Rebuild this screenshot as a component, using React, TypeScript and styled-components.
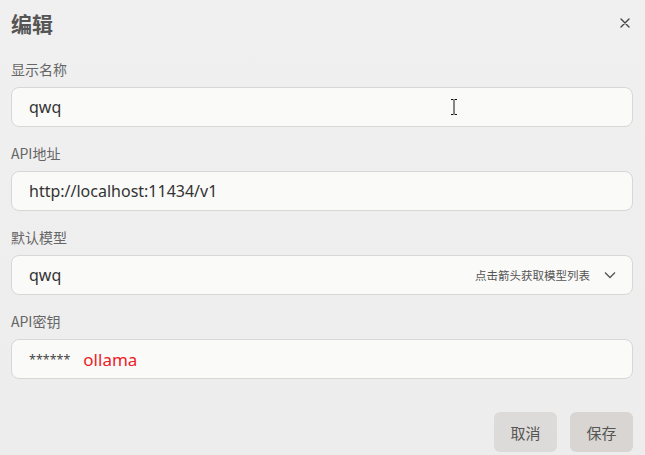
import React from 'react';
import styled, { createGlobalStyle } from 'styled-components';

const GlobalStyle = createGlobalStyle`
  html, body {
    margin: 0;
    padding: 0;
    background: #eeeeee;
  }
  body {
    font-family: "Noto Sans", "Noto Sans CJK SC", sans-serif;
  }
`;

const Dialog = styled.div`
  width: 645px;
  height: 455px;
  box-sizing: border-box;
  padding: 6px 12px 0 11px;
  background: linear-gradient(180deg, #f0f0f0 0%, #ededed 100%);
  display: flex;
  flex-direction: column;
  overflow: hidden;
`;

const Header = styled.div`
  display: flex;
  align-items: center;
  justify-content: space-between;
  height: 34px;
`;

const Title = styled.h2`
  margin: 0;
  font-size: 21px;
  font-weight: 700;
  color: #555555;
  font-family: "Noto Sans CJK SC", sans-serif;
`;

const CloseButton = styled.button`
  border: none;
  background: transparent;
  padding: 0;
  margin-right: 1px;
  width: 14px;
  height: 14px;
  display: flex;
  align-items: center;
  justify-content: center;
  cursor: pointer;
`;

const Field = styled.div`
  display: flex;
  flex-direction: column;
  gap: 8px;
  margin-top: 19px;

  & + & {
    margin-top: 16px;
  }
`;

const Label = styled.label`
  font-size: 14px;
  line-height: 20px;
  color: #666666;
  font-family: "Noto Sans CJK SC", sans-serif;
`;

const InputBox = styled.div`
  position: relative;
  height: 40px;
  box-sizing: border-box;
  border: 1px solid #d9d7d5;
  border-radius: 8px;
  background: #fafaf8;
  display: flex;
  align-items: center;
  padding: 0 16px 0 17px;
  font-size: 16px;
  color: #333333;
`;

const Value = styled.span`
  flex: 1;
  font-family: "Noto Sans", "Noto Sans CJK SC", sans-serif;
`;

const Hint = styled.span`
  font-size: 11.5px;
  color: #555555;
  font-family: "Noto Sans CJK SC", sans-serif;
  margin-right: 14px;
`;

const Masked = styled.span`
  font-size: 12.5px;
  color: #444444;
  margin-right: 13px;
`;

const Note = styled.span`
  font-size: 17px;
  color: #ee1c25;
  font-family: "Noto Sans", sans-serif;
`;

const Cursor = styled.svg`
  position: absolute;
  left: 438px;
  top: 11px;
`;

const Footer = styled.div`
  display: flex;
  justify-content: flex-end;
  gap: 13px;
  margin-top: 33px;
`;

const Button = styled.button<{ $primary?: boolean }>`
  width: 63px;
  height: 40px;
  padding: 0;
  border: none;
  border-radius: 6px;
  background: ${p => (p.$primary ? '#d8d5d2' : '#dddbd9')};
  color: #555555;
  font-size: 15px;
  font-family: "Noto Sans CJK SC", sans-serif;
  cursor: pointer;
`;

const App: React.FC = () => {
  return (
    <>
      <GlobalStyle />
      <Dialog>
        <Header>
          <Title>编辑</Title>
          <CloseButton aria-label="close">
            <svg width="10" height="10" viewBox="0 0 10 10">
              <path d="M1 1L9 9M9 1L1 9" stroke="#444" strokeWidth="1.4" strokeLinecap="round" />
            </svg>
          </CloseButton>
        </Header>

        <Field>
          <Label>显示名称</Label>
          <InputBox>
            <Value>qwq</Value>
            <Cursor width="8" height="16" viewBox="0 0 8 16">
              <path d="M1 0.5H3.5M4.5 0.5H7M4 1V15M1 15.5H3.5M4.5 15.5H7" stroke="#111" strokeWidth="1" />
            </Cursor>
          </InputBox>
        </Field>

        <Field>
          <Label>API地址</Label>
          <InputBox>
            <Value>http://localhost:11434/v1</Value>
          </InputBox>
        </Field>

        <Field>
          <Label>默认模型</Label>
          <InputBox>
            <Value>qwq</Value>
            <Hint>点击箭头获取模型列表</Hint>
            <svg width="12" height="8" viewBox="0 0 12 8">
              <path d="M1 1.5L6 6.5L11 1.5" fill="none" stroke="#555" strokeWidth="1.3" />
            </svg>
          </InputBox>
        </Field>

        <Field>
          <Label>API密钥</Label>
          <InputBox>
            <Masked>******</Masked>
            <Note>ollama</Note>
          </InputBox>
        </Field>

        <Footer>
          <Button>取消</Button>
          <Button $primary>保存</Button>
        </Footer>
      </Dialog>
    </>
  );
};

export default App;
